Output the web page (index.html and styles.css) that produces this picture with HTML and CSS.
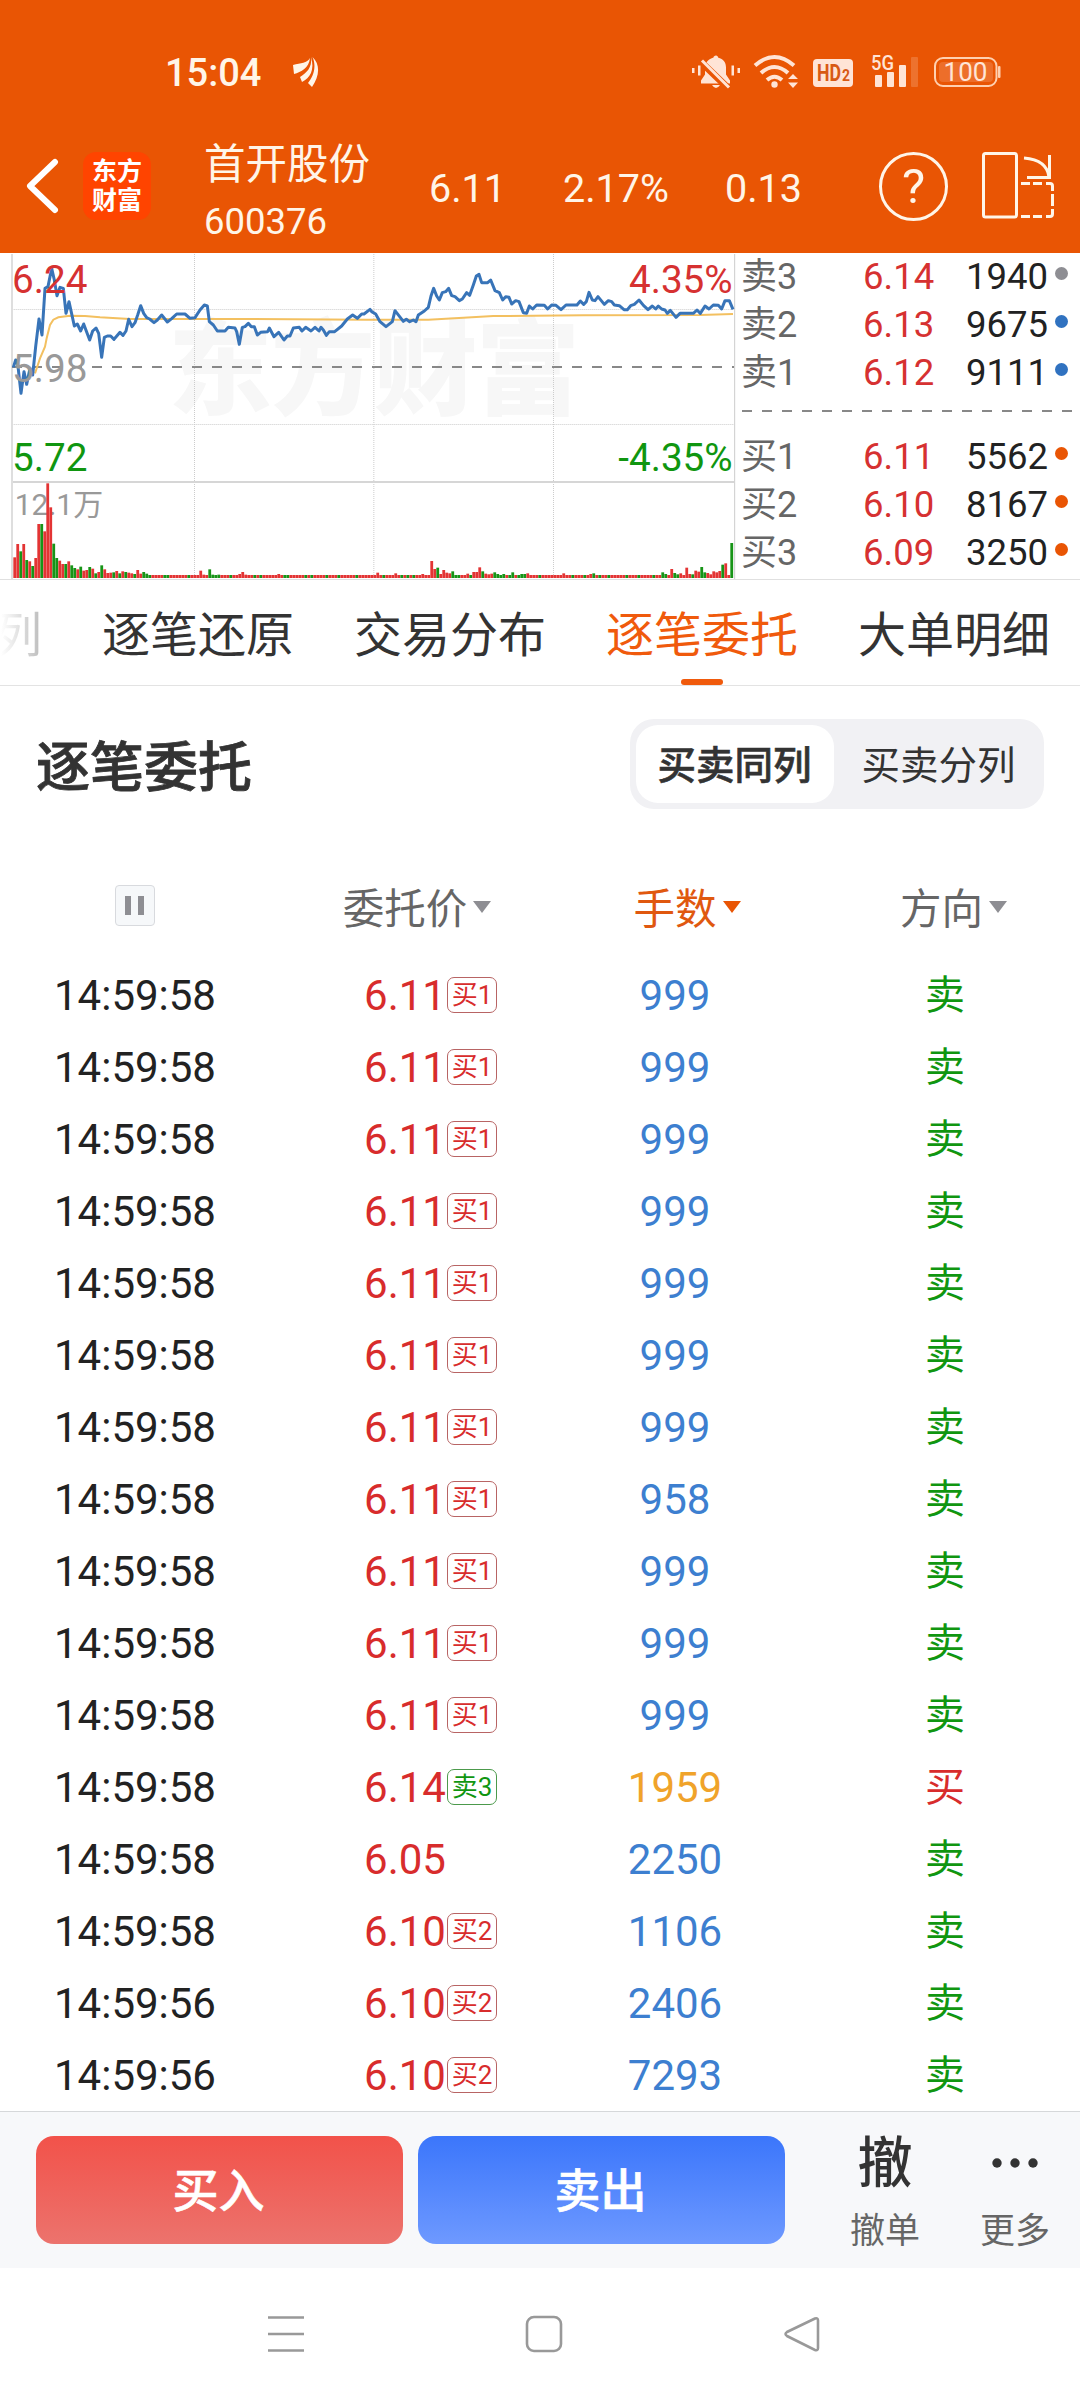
FILE: index.html
```html
<!DOCTYPE html>
<html lang="zh-CN">
<head>
    <meta charset="UTF-8">
    <meta name="viewport" content="width=device-width, initial-scale=1.0">
    <title>首开股份 600376</title>
    <link rel="stylesheet" href="styles.css">
</head>
<body>
    <!-- status bar + stock header -->
    <header class="top">
        <div class="status-bar">
            <span class="clock">15:04</span>
            <svg class="status-logo" width="26" height="30" viewBox="0 0 26 30" fill="#fff5e8">
                <path d="M17 1C14 6 8 6 0 8L1 17C8 15 16 11 17 1Z"/>
                <path d="M18 0C19.500 11 13 16 7 20L9 25C17 21 22 13 18 0Z"/>
                <path d="M19.500 0C24 10 20 20 15 26L19 30C26 20 28 8 19.500 0Z"/>
            </svg>
            <svg class="status-icons" width="312" height="36" viewBox="690 54 312 36" fill="#ffe4d6">
                <!-- muted bell -->
                <path d="M716 55.500c1.500 0 2 1 2 2 5.500 1.500 8 5 8 10v7l4 6v3h-29v-3l4-6v-7c0-5 3.500-8.500 8.500-10 0-1 1-2 2.500-2zM712 85h8q-4 6-8 0z"/>
                <path d="M701 62l27 26" stroke="#e95504" stroke-width="7"/>
                <path d="M702 60.500l27 27" stroke="#ffe4d6" stroke-width="3"/>
                <path d="M692 68h2.500v5H692zM698 65.500h2.500v10H698zM731.500 65.500h2.500v10h-2.500zM737.500 68h2.500v5h-2.500z"/>
                <!-- wifi -->
                <g fill="none" stroke="#ffe4d6" stroke-width="4">
                    <path d="M755 65.500q19.500-17 39 0"/>
                    <path d="M761 73q13.500-12 27 0"/>
                    <path d="M767 80q7.500-6.500 15 0"/>
                </g>
                <circle cx="774.500" cy="84.500" r="3.200"/>
                <path d="M788 79l5-5 5 5zM788 82.500l5 5.500 5-5.500z"/>
                <!-- HD2 -->
                <rect x="813" y="59" width="40" height="28" rx="4"/>
                <text x="817" y="81" class="hd" textLength="24" lengthAdjust="spacingAndGlyphs">HD</text>
                <text x="842" y="81" class="hd-num" textLength="8" lengthAdjust="spacingAndGlyphs">2</text>
                <!-- signal -->
                <text x="871" y="70" class="net" textLength="23" lengthAdjust="spacingAndGlyphs">5G</text>
                <rect x="875" y="75" width="7" height="12" rx="1"/>
                <rect x="887" y="72" width="7" height="15" rx="1"/>
                <rect x="899" y="65" width="7" height="22" rx="1"/>
                <rect x="911" y="57" width="7" height="30" rx="1" opacity=".2"/>
                <!-- battery -->
                <rect x="935" y="58" width="61.500" height="28" rx="8" fill="none" stroke="#ffd0b0" stroke-width="2"/>
                <rect x="939" y="62" width="54" height="20" rx="4" opacity=".18"/>
                <rect x="998" y="66" width="2.500" height="12" rx="1" fill="#ffd0b0"/>
                <text x="965.500" y="81" class="battery">100</text>
            </svg>
        </div>
        <div class="stock-bar">
            <svg class="back" width="34" height="58" viewBox="0 0 34 58" fill="none" stroke="#fff" stroke-width="6" stroke-linecap="round" stroke-linejoin="round">
                <path d="M30 5L5 29l25 24"/>
            </svg>
            <div class="app-logo"><span>东方</span><span>财富</span></div>
            <div class="stock">
                <div class="stock-name">首开股份</div>
                <div class="stock-code">600376</div>
            </div>
            <span class="quote price">6.11</span>
            <span class="quote percent">2.17%</span>
            <span class="quote change">0.13</span>
            <span class="help">?</span>
            <svg class="rotate" width="74" height="70" viewBox="981 151 74 70" fill="none" stroke="#fff5e8" stroke-width="3">
                <rect x="983.500" y="153.500" width="33" height="63.500" rx="2"/>
                <path d="M1024 158q23 2 25 19M1049.500 155v22.500H1027"/>
                <path d="M1021 183.500h9M1033 183.500h9M1046 183.500h4q2.500 0 2.500 2.500v5M1052.500 194v12M1052.500 209v5q0 2.500-2.500 2.500h-4M1042 216.500h-9M1030 216.500h-9"/>
            </svg>
        </div>
    </header>

    <!-- minute chart + order book -->
    <section class="market">
        <svg class="chart" width="736" height="325" viewBox="0 12 2208 975">
            <text class="watermark" x="505" y="472" textLength="1235">东方财富</text>
            <g class="grid">
                <path d="M37 178.500H2202M37 523.500H2202M583.500 12V984M1121.500 12V984M1660.500 12V984"/>
            </g>
            <path d="M37 696H2202" stroke="#d6d6d6" stroke-width="6"/>
            <path d="M36 12V987" stroke="#dedede" stroke-width="6"/>
            <path d="M2204 12V987" stroke="#ccc" stroke-width="3"/>
            <path d="M36 351H2202" stroke="#888" stroke-width="6" stroke-dasharray="30 30"/>
            <polyline class="avg-line" points="105,370 120,325 135,290 140,265 150,225 160,209 175,202 210,197 255,198 300,202 390,207 700,207 1100,209 1285,209 1390,203 1480,198 1750,196 2100,195 2199,192"/>
            <polyline class="price-line" points="40,352 47,330 53,340 63,430 72,365 80,403 90,355 98,375 107,290 117,207 126,255 135,115 144,110 155,55 163,90 171,137 180,112 190,115 198,190 207,155 223,228 232,222 242,243 251,222 269,270 278,243 288,234 296,250 305,322 313,262 322,258 332,258 342,268 360,247 369,256 378,243 386,208 396,230 405,218 413,195 422,167 431,190 440,203 449,207 462,218 472,210 485,195 502,216 515,206 530,192 555,192 570,205 585,203 600,180 613,165 622,168 628,215 640,225 652,243 675,243 685,232 705,234 710,245 718,283 727,232 735,230 745,220 754,230 763,230 772,255 782,247 803,245 808,234 822,260 836,247 852,270 862,258 870,258 880,234 898,232 906,243 917,232 933,243 945,232 957,243 963,232 970,240 979,256 988,245 1004,245 1025,228 1042,207 1058,195 1072,205 1085,192 1092,192 1110,178 1115,185 1127,192 1140,215 1158,230 1177,215 1185,182 1210,214 1219,208 1229,215 1240,210 1248,215 1255,195 1273,183 1285,172 1293,138 1301,115 1310,138 1318,150 1327,128 1337,125 1346,115 1355,137 1365,140 1378,152 1387,147 1400,128 1409,136 1420,105 1429,78 1437,73 1445,98 1463,98 1472,90 1485,122 1498,128 1508,150 1517,140 1527,142 1535,162 1547,152 1557,155 1570,188 1580,190 1588,168 1598,177 1610,165 1633,166 1643,177 1655,165 1668,166 1683,179 1698,165 1731,165 1741,153 1751,163 1759,155 1767,127 1777,150 1785,152 1794,140 1813,163 1825,152 1835,155 1843,165 1858,167 1872,179 1882,179 1892,167 1903,163 1917,150 1931,167 1944,179 1957,168 1967,177 1975,168 1985,177 1995,180 2002,190 2011,181 2028,202 2040,190 2080,190 2091,180 2101,190 2115,168 2127,177 2140,165 2155,166 2165,177 2175,152 2188,152 2199,178"/>
            <text class="axis up" x="36" y="128">6.24</text>
            <text class="axis flat" x="36" y="395">5.98</text>
            <text class="axis down" x="36" y="662">5.72</text>
            <text class="axis up end" x="2198" y="128">4.35%</text>
            <text class="axis down end" x="2198" y="662">-4.35%</text>
            <text class="volume-max" x="44" y="795">12.1万</text>
            <g id="volume"></g>
        </svg>
        <div class="book">
            <div class="book-row"><span>卖3</span><b>6.14</b><em>1940</em><i class="dot grey"></i></div>
            <div class="book-row"><span>卖2</span><b>6.13</b><em>9675</em><i class="dot blue"></i></div>
            <div class="book-row"><span>卖1</span><b>6.12</b><em>9111</em><i class="dot blue"></i></div>
            <div class="book-split"></div>
            <div class="book-row"><span>买1</span><b>6.11</b><em>5562</em><i class="dot orange"></i></div>
            <div class="book-row"><span>买2</span><b>6.10</b><em>8167</em><i class="dot orange"></i></div>
            <div class="book-row"><span>买3</span><b>6.09</b><em>3250</em><i class="dot orange"></i></div>
        </div>
    </section>

    <nav class="tabs">
        <a class="tab faded">列</a>
        <a class="tab">逐笔还原</a>
        <a class="tab">交易分布</a>
        <a class="tab active">逐笔委托</a>
        <a class="tab">大单明细</a>
    </nav>

    <main class="orders">
        <div class="orders-head">
            <h1>逐笔委托</h1>
            <div class="switch">
                <button class="switch-item on">买卖同列</button>
                <button class="switch-item">买卖分列</button>
            </div>
        </div>

        <div class="row head">
            <div><span class="pause"></span></div>
            <div><span class="sort">委托价</span></div>
            <div><span class="sort on">手数</span></div>
            <div><span class="sort last">方向</span></div>
        </div>
        <div class="row"><div>14:59:58</div><div class="p">6.11<span class="tag">买1</span></div><div class="q">999</div><div class="sell">卖</div></div>
        <div class="row"><div>14:59:58</div><div class="p">6.11<span class="tag">买1</span></div><div class="q">999</div><div class="sell">卖</div></div>
        <div class="row"><div>14:59:58</div><div class="p">6.11<span class="tag">买1</span></div><div class="q">999</div><div class="sell">卖</div></div>
        <div class="row"><div>14:59:58</div><div class="p">6.11<span class="tag">买1</span></div><div class="q">999</div><div class="sell">卖</div></div>
        <div class="row"><div>14:59:58</div><div class="p">6.11<span class="tag">买1</span></div><div class="q">999</div><div class="sell">卖</div></div>
        <div class="row"><div>14:59:58</div><div class="p">6.11<span class="tag">买1</span></div><div class="q">999</div><div class="sell">卖</div></div>
        <div class="row"><div>14:59:58</div><div class="p">6.11<span class="tag">买1</span></div><div class="q">999</div><div class="sell">卖</div></div>
        <div class="row"><div>14:59:58</div><div class="p">6.11<span class="tag">买1</span></div><div class="q">958</div><div class="sell">卖</div></div>
        <div class="row"><div>14:59:58</div><div class="p">6.11<span class="tag">买1</span></div><div class="q">999</div><div class="sell">卖</div></div>
        <div class="row"><div>14:59:58</div><div class="p">6.11<span class="tag">买1</span></div><div class="q">999</div><div class="sell">卖</div></div>
        <div class="row"><div>14:59:58</div><div class="p">6.11<span class="tag">买1</span></div><div class="q">999</div><div class="sell">卖</div></div>
        <div class="row"><div>14:59:58</div><div class="p">6.14<span class="tag green">卖3</span></div><div class="q big">1959</div><div class="buy">买</div></div>
        <div class="row"><div>14:59:58</div><div class="p">6.05</div><div class="q">2250</div><div class="sell">卖</div></div>
        <div class="row"><div>14:59:58</div><div class="p">6.10<span class="tag">买2</span></div><div class="q">1106</div><div class="sell">卖</div></div>
        <div class="row"><div>14:59:56</div><div class="p">6.10<span class="tag">买2</span></div><div class="q">2406</div><div class="sell">卖</div></div>
        <div class="row"><div>14:59:56</div><div class="p">6.10<span class="tag">买2</span></div><div class="q">7293</div><div class="sell">卖</div></div>
    </main>

    <footer class="trade-bar">
        <button class="trade buy-btn">买入</button>
        <button class="trade sell-btn">卖出</button>
        <div class="tool cancel"><b>撤</b><span>撤单</span></div>
        <div class="tool more">
            <b><svg width="50" height="12" viewBox="0 0 50 12" fill="#333"><circle cx="7" cy="6" r="4.700"/><circle cx="25" cy="6" r="4.700"/><circle cx="43" cy="6" r="4.700"/></svg></b>
            <span>更多</span>
        </div>
    </footer>

    <!-- system navigation -->
    <div class="sys-nav">
        <svg width="38" height="38" viewBox="0 0 38 38"><path d="M1 2.500h36M1 19h36M1 35.500h36"/></svg>
        <svg width="38" height="38" viewBox="0 0 38 38"><rect x="2" y="2" width="34" height="34" rx="7"/></svg>
        <svg width="38" height="38" viewBox="0 0 38 38"><path d="M32 3.500L4 17q-3 2 0 4l28 14q3 1 3-2V5.500q0-3-3-2z"/></svg>
    </div>

    <script src="script.js"></script>
</body>
</html>
```

FILE: styles.css
```css
* {
    box-sizing: border-box;
}

body {
    margin: 0;
    width: 1080px;
    height: 2400px;
    overflow: hidden;
    background: #fff;
    color: #222;
    font-family: Roboto, "Noto Sans CJK SC", sans-serif;
}

b, em, i {
    font-weight: normal;
    font-style: normal;
}

button {
    border: none;
    padding: 0;
    background: none;
    color: inherit;
    font-family: inherit;
}

/* header */
.top {
    height: 253px;
    background: #e95504;
    color: #fff5e8;
}

.status-bar {
    display: flex;
    align-items: center;
    height: 119px;
    padding: 25px 78px 0 165px;
}

.clock {
    width: 128px;
    padding-top: 2px;
    font-size: 38px;
    font-weight: 500;
    line-height: 40px;
}

.status-icons {
    margin-left: auto;
    overflow: visible;
}

.hd, .hd-num, .net {
    font-size: 23px;
    font-weight: 700;
}

.hd, .hd-num {
    fill: #d85a14;
}

.hd-num {
    font-size: 17px;
}

.net {
    font-size: 20px;
    font-weight: 500;
}

.battery {
    font-size: 26px;
    text-anchor: middle;
}

.stock-bar {
    display: flex;
    align-items: center;
    height: 134px;
    padding: 0 25px 0 25px;
}

.app-logo {
    display: flex;
    flex-direction: column;
    justify-content: center;
    width: 68px;
    height: 68px;
    margin-left: 24px;
    border-radius: 13px;
    background: #ff4400;
    color: #fff;
    font-size: 25px;
    font-weight: 700;
    line-height: 29px;
    text-align: center;
}

.stock {
    width: 225px;
    margin-left: 53px;
    padding-top: 11px;
}

.stock-name {
    font-size: 41.5px;
    line-height: 56px;
}

.stock-code {
    font-size: 36.5px;
    line-height: 50px;
    margin-top: 4px;
}

.quote {
    font-size: 39.5px;
    line-height: 50px;
    padding-top: 5px;
}

.price {
    width: 134px;
}

.percent {
    width: 162px;
}

.help {
    width: 69px;
    height: 69px;
    margin-left: auto;
    border: 3px solid #fff5e8;
    border-radius: 50%;
    font-size: 49px;
    line-height: 64px;
    text-align: center;
}

.rotate {
    margin-left: 33px;
}

/* chart and order book */
.market {
    display: flex;
    height: 327px;
    padding-top: 1px;
    border-bottom: 1px solid #e0e0e0;
}

.watermark {
    font-size: 312px;
    font-weight: 900;
    fill: #f7f7f7;
}

.grid {
    stroke: #ccc;
    stroke-width: 3;
    stroke-dasharray: 3 3;
}

.avg-line {
    fill: none;
    stroke: #f3c060;
    stroke-width: 6;
}

.price-line {
    fill: none;
    stroke: #3874b8;
    stroke-width: 9;
    stroke-linejoin: round;
}

.axis {
    font-size: 116px;
}

.axis.end {
    text-anchor: end;
}

.up {
    fill: #d63131;
}

.flat {
    fill: #999;
}

.down {
    fill: #109610;
}

.volume-max {
    font-size: 90px;
    fill: #999;
}

.bar-red {
    fill: #e33434;
}

.bar-green {
    fill: #179417;
}

.book {
    flex: 1;
    padding-left: 5px;
}

.book-row {
    display: grid;
    grid-template-columns: 122px 103px 87px 20px;
    align-items: center;
    height: 48px;
    font-size: 36.5px;
    line-height: 48px;
}

.book-row:first-child {
    margin-top: -2px;
}

.book-row span {
    padding-top: 1px;
    color: #666;
    font-size: 36px;
}

.book-row b {
    color: #d63131;
}

.dot {
    width: 13px;
    height: 13px;
    margin-left: 2px;
    margin-bottom: 6px;
    border-radius: 50%;
}

.grey {
    background: #8e8e93;
}

.blue {
    background: #3072c0;
}

.orange {
    background: #e95504;
}

.book-split {
    height: 2px;
    margin: 14px 8px 20px 1px;
    background: repeating-linear-gradient(90deg, #888 0 10px, transparent 10px 20px);
}

/* tabs */
.tabs {
    display: flex;
    gap: 60px;
    height: 106px;
    margin-left: -6px;
    border-bottom: 1px solid #e3e3e3;
}

.tab {
    position: relative;
    flex: none;
    height: 105px;
    color: #333;
    font-size: 48px;
    line-height: 111px;
}

.tab.faded {
    background: linear-gradient(90deg, #fff 15%, #bbb);
    background-clip: text;
    -webkit-background-clip: text;
    color: transparent;
}

.tab.active {
    color: #f05a0c;
}

.tab.active::after {
    content: "";
    position: absolute;
    left: 75px;
    bottom: 0;
    width: 42px;
    height: 6px;
    border-radius: 3px;
    background: #f05a0c;
}

/* order list */
.orders {
    height: 1425px;
}

.orders-head {
    display: flex;
    justify-content: space-between;
    align-items: center;
    height: 156px;
    padding: 0 36px;
}

.orders-head h1 {
    margin: 0;
    padding-top: 10px;
    color: #333;
    font-size: 54px;
    font-weight: 500;
    line-height: 80px;
    -webkit-text-stroke: 0.8px #333;
}

.switch {
    display: flex;
    width: 414px;
    height: 90px;
    padding: 6px;
    border-radius: 24px;
    background: #f1f1f4;
}

.switch-item {
    width: 198px;
    padding: 3px 1px 0 0;
    border-radius: 22px;
    color: #333;
    font-size: 38.5px;
    line-height: 75px;
}

.switch-item + .switch-item {
    margin-left: 6px;
}

.switch-item.on {
    background: #fff;
    font-weight: 500;
    -webkit-text-stroke: 0.6px #333;
}

.row {
    display: grid;
    grid-template-columns: repeat(4, 270px);
    height: 72px;
    font-size: 42px;
    line-height: 75px;
    text-align: center;
}

.row.head {
    height: 116px;
    padding-top: 30px;
    color: #666;
    font-size: 41.5px;
}

.pause {
    display: inline-block;
    width: 40px;
    height: 41px;
    margin-top: 13px;
    border: 1px solid #d8dade;
    border-radius: 4px;
    background:
        linear-gradient(#8e8e93, #8e8e93) 9px 10px / 6px 19px no-repeat,
        linear-gradient(#8e8e93, #8e8e93) 22px 10px / 6px 19px no-repeat,
        #f6f8fa;
}

.sort {
    position: relative;
}

.sort::after {
    content: "";
    position: absolute;
    left: calc(100% + 6px);
    top: 16px;
    border: 9px solid transparent;
    border-top: 12px solid #8e8e93;
    border-bottom: none;
}

.sort.on {
    color: #e0580f;
}

.sort.on::after {
    border-top-color: #e95504;
}

.sort.last {
    margin-right: 7px;
}

.p, .buy {
    color: #d82c2c;
}

.p {
    position: relative;
}

.q {
    color: #3d7fd0;
}

.q.big {
    color: #f0a32a;
}

.sell {
    color: #109610;
}

.buy, .sell {
    font-size: 40px;
    line-height: 76px;
}

.tag {
    position: absolute;
    left: 177px;
    top: 19px;
    width: 50px;
    height: 36px;
    border: 1px solid #b86464;
    border-radius: 7px;
    font-size: 26px;
    line-height: 35px;
}

.tag.green {
    border-color: #4c9a4c;
    color: #109610;
}

/* bottom trade bar */
.trade-bar {
    display: flex;
    height: 157px;
    padding: 24px 0 0 36px;
    border-top: 1px solid #d6d8da;
    background: #f7f8fa;
}

.trade {
    width: 367px;
    height: 108px;
    margin-right: 15px;
    padding: 3px 2px 0 0;
    border-radius: 18px;
    color: #fff;
    font-size: 46px;
    font-weight: 500;
    line-height: 105px;
    -webkit-text-stroke: 0.6px #fff;
}

.buy-btn {
    background: linear-gradient(#f2524a, #ec736d);
}

.sell-btn {
    background: linear-gradient(#3b76fb, #6e99ff);
}

.tool {
    display: flex;
    flex-direction: column;
    align-items: center;
    width: 130px;
    font-size: 35px;
    color: #666;
}

.cancel {
    margin-left: 20px;
}

.tool b {
    display: flex;
    align-items: center;
    height: 54px;
    color: #333;
    font-size: 55px;
    font-weight: 500;
    line-height: 54px;
}

.tool span {
    margin-top: 17px;
    line-height: 50px;
}

/* system nav */
.sys-nav {
    display: flex;
    gap: 220px;
    height: 132px;
    padding: 47px 0 0 267px;
    fill: none;
    stroke: #999;
    stroke-width: 2.6;
}
```

FILE: script.js
```js
// minute volume: r = up, g = down, number = bar height
const opening = "r62 r102 g80 r102 g54 r50 g36 r60 r162 g162 r140 r284 r212 g103 g60 r52 r42 g42 r50 g38 g30 r26 g34 r22 r24 g33 r28 g14 r18 g38 r26 r15 r16 g17 r21 g14 r20 g18 r16 r14 g12 r24 r13 g18 g13".split(" ");

const spikes = {
    62: "r22", 63: "r10", 65: "g26", 66: "g10", 68: "g10", 75: "r12", 76: "r18", 77: "r10", 88: "r12",
    121: "r16", 127: "r14", 136: "r12", 139: "r51", 140: "r27", 141: "g31", 142: "r12", 143: "r24",
    144: "r16", 145: "r14", 146: "g20", 151: "r13", 153: "r18", 154: "r18", 155: "r32", 156: "g20",
    157: "r13", 158: "r11", 159: "r13", 160: "g17", 161: "g12", 163: "g12", 166: "g17", 169: "g12",
    170: "g12", 171: "r14", 183: "r14", 192: "r12", 193: "g14", 216: "g17", 217: "g12", 219: "r27",
    220: "g15", 221: "g11", 222: "r14", 224: "r31", 225: "r12", 226: "g11", 227: "r22", 228: "r19",
    229: "g33", 230: "g17", 231: "r15", 232: "r11", 233: "r20", 234: "r17", 235: "r21", 236: "g40",
    237: "r44", 238: "r9", 239: "g105"
};

const quietGreen = [45, 50, 51, 58, 67, 72, 80, 82, 90, 91, 97, 99, 104, 108, 114, 123, 129, 131, 133, 147, 148, 152, 162, 165, 168, 175, 186, 190, 195, 198, 204, 208, 213];
const group = document.getElementById("volume");

for (let i = 0; i < 240; i++) {
    const item = opening[i] || spikes[i] || (quietGreen.includes(i) ? "g9" : "r9");
    const height = Number(item.slice(1));
    const bar = document.createElementNS("http://www.w3.org/2000/svg", "rect");
    bar.setAttribute("x", 40 + i * 9);
    bar.setAttribute("y", 984 - height);
    bar.setAttribute("width", 8.4);
    bar.setAttribute("height", height);
    bar.setAttribute("class", item[0] === "r" ? "bar-red" : "bar-green");
    group.appendChild(bar);
}
```
